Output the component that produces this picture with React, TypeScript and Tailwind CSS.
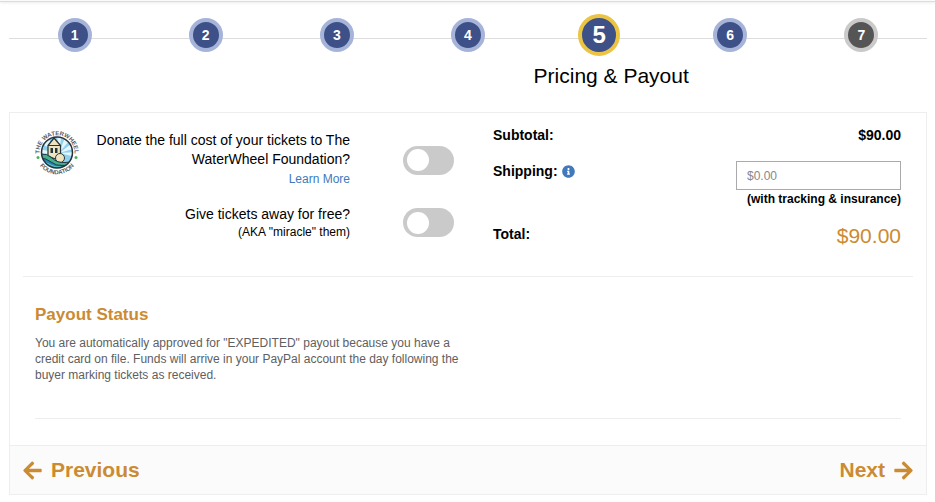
import { useState } from "react";
import { FaArrowLeft, FaArrowRight, FaInfoCircle } from "react-icons/fa";

type StepState = "done" | "active" | "upcoming";

const steps: { number: number; state: StepState }[] = [
  { number: 1, state: "done" },
  { number: 2, state: "done" },
  { number: 3, state: "done" },
  { number: 4, state: "done" },
  { number: 5, state: "active" },
  { number: 6, state: "done" },
  { number: 7, state: "upcoming" },
];

const stepStyles: Record<StepState, string> = {
  done: "size-[34px] border-[#a6b4d9] bg-[#3d5087] text-sm",
  active: "size-[42px] border-[#ebc443] bg-[#3d5087] text-2xl",
  upcoming: "size-[34px] border-[#cacaca] bg-[#555555] text-sm",
};

function Stepper() {
  return (
    <nav aria-label="Progress" className="relative">
      <div className="absolute inset-x-0 top-6 h-px bg-[#dddddd]" />
      <ol className="relative grid grid-cols-7">
        {steps.map(({ number, state }) => (
          <li key={number} className="flex flex-col items-center">
            <div className="flex h-[42px] items-center">
              <span
                aria-current={state === "active" ? "step" : undefined}
                className={`flex items-center justify-center rounded-full border-4 leading-none font-bold text-white ${stepStyles[state]}`}
              >
                {number}
              </span>
            </div>
            {state === "active" && (
              <h1 className="mt-2 self-start text-[21px] leading-6 font-medium whitespace-nowrap text-black">
                Pricing &amp; Payout
              </h1>
            )}
          </li>
        ))}
      </ol>
    </nav>
  );
}

function FoundationLogo() {
  return (
    <svg viewBox="0 0 88 88" className="size-11 shrink-0 overflow-visible" role="img" aria-label="The WaterWheel Foundation">
      <defs>
        <path id="logo-top" d="M9.6 50A35 35 0 1 1 78.4 50" />
        <path id="logo-bottom" d="M1.5 50A43 43 0 0 0 86.5 50" />
        <clipPath id="logo-disc">
          <circle cx="44" cy="43" r="31" />
        </clipPath>
      </defs>
      <g clipPath="url(#logo-disc)">
        <rect x="10" y="10" width="68" height="68" fill="#8fd0ec" />
        <g fill="#e4f5fb">
          <path d="M48 44 44 8h9z" />
          <path d="M48 44 62 8l10 7z" />
          <path d="M48 44 78 22l5 12z" />
          <path d="M48 44 82 42v10z" />
          <path d="M48 44 10 24l12-14z" />
          <path d="M48 44 8 46V36z" />
        </g>
        <path
          d="M26 29 38 14 51 29v28q-13 0-25-8z"
          fill="#efe4c0"
          stroke="#27363b"
          strokeWidth="2.5"
          strokeLinejoin="round"
        />
        <path d="M26 29h25" stroke="#27363b" strokeWidth="2" />
        <path d="M31 34h5v10h-5zM40 34h5v10h-5z" fill="#27363b" />
        <circle cx="50" cy="54" r="9" fill="#efe4c0" stroke="#27363b" strokeWidth="2" />
        <path
          d="M10 46q14-2 24 8t26 9q12 0 18-4l-4 20H10z"
          fill="#45b08a"
          stroke="#203a48"
          strokeWidth="2"
        />
        <path d="M10 54q12 0 22 8t24 7q10 0 18-4v14H10z" fill="#2385b0" stroke="#203a48" strokeWidth="2" />
        <path d="M14 62q10 1 18 6t20 4" fill="none" stroke="#6fc6c0" strokeWidth="2" />
      </g>
      <circle cx="44" cy="43" r="31" fill="none" stroke="#26343b" strokeWidth="3" />
      <circle cx="6" cy="53" r="3" fill="#46b45a" />
      <circle cx="82" cy="53" r="3" fill="#46b45a" />
      <g className="font-['Liberation_Sans',sans-serif] font-bold" fill="#5a5a5a" fontSize="12">
        <text textAnchor="middle">
          <textPath href="#logo-top" startOffset="50%">
            THE WATERWHEEL
          </textPath>
        </text>
        <text textAnchor="middle">
          <textPath href="#logo-bottom" startOffset="50%">
            FOUNDATION
          </textPath>
        </text>
      </g>
    </svg>
  );
}

function Toggle({ id }: { id: string }) {
  const [on, setOn] = useState(false);
  return (
    <input
      id={id}
      type="checkbox"
      role="switch"
      checked={on}
      onChange={(event) => setOn(event.target.checked)}
      className="flex h-[29px] w-[51px] shrink-0 cursor-pointer appearance-none items-center rounded-full bg-[#cacaca] px-1 before:size-[22px] before:rounded-full before:bg-white checked:justify-end checked:bg-[#3d5087]"
    />
  );
}

export default function App() {
  const [shipping, setShipping] = useState("");

  return (
    <div className="bg-white font-['Liberation_Sans',Arial,sans-serif] text-black">
      <div className="h-[2px] border-b border-[#dcdcdc] bg-[#fafafa] shadow-[0_1px_3px_#00000018]" />
      <div className="pt-3 pr-2 pl-[9px]">
        <Stepper />

        <main className="mt-6 border border-[#eeeeee]">
          <section className="mx-[13px] grid grid-cols-[458fr_408fr] border-b border-[#eeeeee] px-3 pt-3 pb-7">
            <div className="flex flex-col gap-4 pt-[6px] pr-[39px]">
              <div className="flex items-center">
                <div className="self-start">
                  <FoundationLogo />
                </div>
                <div className="min-w-0 flex-1 text-right">
                  <label htmlFor="donate" className="ml-4 block text-sm leading-[19px]">
                    Donate the full cost of your tickets to The WaterWheel Foundation?
                  </label>
                  <a href="#learn-more" className="block text-xs leading-5 text-[#4279bd] hover:underline">
                    Learn More
                  </a>
                </div>
                <div className="ml-[53px]">
                  <Toggle id="donate" />
                </div>
              </div>
              <div className="flex items-center justify-end">
                <label htmlFor="giveaway" className="block text-right text-sm leading-[19px]">
                  Give tickets away for free?
                  <span className="block text-xs leading-4">(AKA "miracle" them)</span>
                </label>
                <div className="ml-[53px]">
                  <Toggle id="giveaway" />
                </div>
              </div>
            </div>

            <div className="flex flex-col gap-4 text-sm leading-5 font-bold">
              <div className="flex justify-between">
                <span>Subtotal:</span>
                <span>$90.00</span>
              </div>
              <div className="flex justify-between">
                <div className="flex h-5 items-center gap-1">
                  <label htmlFor="shipping">Shipping:</label>
                  <button type="button" aria-label="Shipping information" className="text-[#4279bd]">
                    <FaInfoCircle size={13} />
                  </button>
                </div>
                <div className="flex flex-col items-end">
                  <input
                    id="shipping"
                    type="text"
                    placeholder="$0.00"
                    value={shipping}
                    onChange={(event) => setShipping(event.target.value)}
                    className="h-[29px] w-[165px] border border-[#aaaaaa] px-[10px] text-xs font-normal placeholder:text-[#888888]"
                  />
                  <span className="text-xs leading-[18px]">(with tracking &amp; insurance)</span>
                </div>
              </div>
              <div className="flex justify-between">
                <span>Total:</span>
                <span className="text-[21px] leading-6 font-normal text-[#cb8b32]">$90.00</span>
              </div>
            </div>
          </section>

          <section className="mx-[25px] border-b border-[#eeeeee] pt-[26px] pb-[35px]">
            <h2 className="text-[17px] leading-6 font-bold text-[#cb8b32]">Payout Status</h2>
            <p className="mt-2 w-1/2 text-xs leading-4 text-[#606060]">
              You are automatically approved for "EXPEDITED" payout because you have a credit card on file. Funds will
              arrive in your PayPal account the day following the buyer marking tickets as received.
            </p>
          </section>

          <footer className="mt-[26px] flex items-center justify-between border-t border-[#eeeeee] bg-[#fbfbfb] px-3 py-3 text-[21px] leading-6 font-bold text-[#cb8b32]">
            <button type="button" className="flex cursor-pointer items-center gap-2">
              <FaArrowLeft size={21} />
              Previous
            </button>
            <button type="button" className="flex cursor-pointer items-center gap-2">
              Next
              <FaArrowRight size={21} />
            </button>
          </footer>
        </main>
      </div>
    </div>
  );
}
